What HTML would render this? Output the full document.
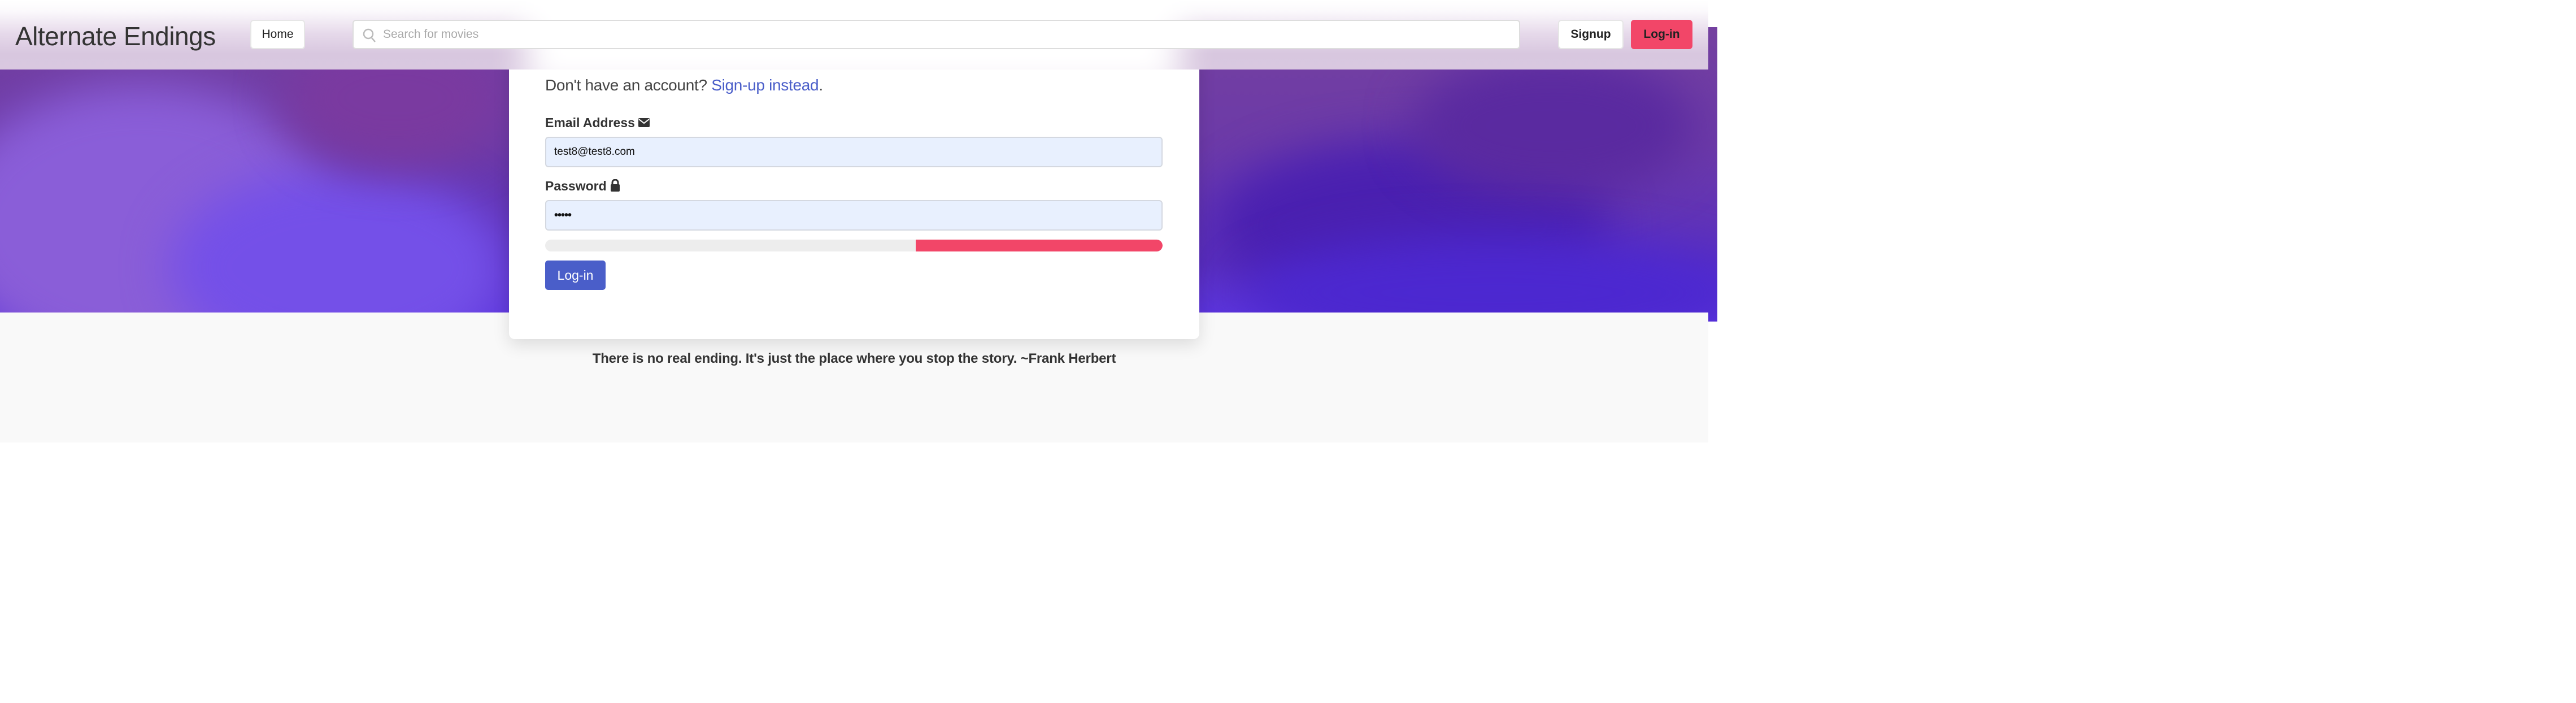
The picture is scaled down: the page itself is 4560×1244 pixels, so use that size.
<!DOCTYPE html>
<html><head><meta charset="utf-8"><style>
*{box-sizing:border-box;margin:0;padding:0}
body{width:4560px;height:1244px;background:#fff;font-family:"Liberation Sans",sans-serif;position:relative;overflow:hidden}
.hero{position:absolute;left:0;top:48px;width:3040px;height:521px;overflow:hidden;
background:linear-gradient(180deg,#7440a0 0%,#6c3aa8 40%,#5a2fc0 80%,#5c36e0 100%)}
.hero .b{position:absolute;border-radius:50%;filter:blur(40px)}
.gray{position:absolute;left:0;top:553px;width:3024px;height:230px;background:#f9f9f9}
.nav{position:absolute;left:0;top:0;width:3024px;height:123px;overflow:hidden;
background:linear-gradient(180deg,#ffffff 0px,#fbf9fc 20px,#e6d9ea 60px,#d8c7df 95px,#d9c8e0 123px)}
.nav .wh{position:absolute;left:930px;top:-40px;width:1160px;height:200px;background:#fff;filter:blur(30px)}
.brand{position:absolute;left:27px;top:37px;font-size:46px;color:#333;letter-spacing:-0.5px}
.btn{position:absolute;top:35px;height:52px;border-radius:6px;font-size:21px;display:flex;align-items:center;justify-content:center;color:#222}
.search{position:absolute;left:624px;top:35px;width:2067px;height:52px;background:#fff;border:2px solid #ddd;border-radius:6px;color:#aaa;font-size:21px;display:flex;align-items:center;padding-left:52px}
.card{position:absolute;left:901px;top:-40px;width:1222px;height:640px;background:#fff;border-radius:10px;box-shadow:0 10px 30px rgba(0,0,0,.12)}
.in{position:absolute;left:965px;width:1093px;height:54px;background:#e8f0fe;border:2px solid #d4d8e0;border-radius:6px;font-size:19px;display:flex;align-items:center;padding-left:14px;color:#111}
.lbl{position:absolute;left:965px;font-size:23px;font-weight:bold;color:#333}
</style></head><body>
<div class="hero">
 <div class="b" style="left:-100px;top:100px;width:700px;height:500px;background:#8a5ed8"></div>
 <div class="b" style="left:300px;top:250px;width:600px;height:350px;background:#7450e8"></div>
 <div class="b" style="left:500px;top:0px;width:400px;height:250px;background:#7a3aa0"></div>
 <div class="b" style="left:2150px;top:200px;width:700px;height:300px;background:#4a20b0"></div>
 <div class="b" style="left:2500px;top:50px;width:500px;height:250px;background:#5a2aa0"></div>
 <div class="b" style="left:2200px;top:370px;width:900px;height:200px;background:#4c28d0"></div>
</div>
<div class="gray"></div>
<div class="card"></div>
<div style="position:absolute;left:965px;top:62px;font-size:50px;font-weight:bold;color:#333">Log-in</div>
<div style="position:absolute;left:965px;top:135px;font-size:28px;color:#444;letter-spacing:-0.3px">Don't have an account? <span style="color:#4a5ec9">Sign-up instead</span>.</div>
<div class="lbl" style="top:204px">Email Address <svg width="20" height="18" viewBox="0 0 20 18" style="vertical-align:-1px"><rect x="0" y="1" width="20" height="16" rx="2" fill="#333"/><path d="M1 3l9 7 9-7" stroke="#fff" stroke-width="2" fill="none"/></svg></div>
<div class="in" style="top:242px">test8@test8.com</div>
<div class="lbl" style="top:316px">Password <svg width="18" height="22" viewBox="0 0 18 22" style="vertical-align:-2px"><path d="M4 10V6a5 5 0 0110 0v4" stroke="#333" stroke-width="3" fill="none"/><rect x="1" y="9" width="16" height="13" rx="2" fill="#333"/></svg></div>
<div class="in" style="top:354px;font-size:20px;font-weight:bold;letter-spacing:-1px">•••••</div>
<div style="position:absolute;left:965px;top:424px;width:1093px;height:21px;background:#ededed;border-radius:11px;overflow:hidden"><div style="position:absolute;left:656px;top:0;width:437px;height:21px;background:#f24668;border-radius:0 11px 11px 0"></div></div>
<div style="position:absolute;left:965px;top:461px;width:107px;height:52px;background:#4a5ec9;border-radius:5px;color:#fff;font-size:23px;display:flex;align-items:center;justify-content:center">Log-in</div>
<div style="position:absolute;left:1042px;top:621px;width:940px;text-align:center;font-size:24px;font-weight:bold;color:#333;white-space:nowrap;letter-spacing:-0.2px">There is no real ending. It's just the place where you stop the story. ~Frank Herbert</div>
<div class="nav">
 <div class="wh"></div>
 <div class="brand">Alternate Endings</div>
 <div class="btn" style="left:443px;width:97px;background:#fff;border:2px solid #e6e6e6">Home</div>
 <div class="search"><svg style="position:absolute;left:16px;top:13px" width="24" height="26" viewBox="0 0 24 26"><circle cx="10" cy="10" r="8" stroke="#bbb" stroke-width="2.5" fill="none"/><path d="M16 17l6 7" stroke="#bbb" stroke-width="2.5"/></svg>Search for movies</div>
 <div class="btn" style="left:2758px;width:116px;background:#fff;border:2px solid #e6e6e6;font-weight:bold">Signup</div>
 <div class="btn" style="left:2887px;width:109px;background:#f24668;font-weight:bold">Log-in</div>
</div>
</body></html>
